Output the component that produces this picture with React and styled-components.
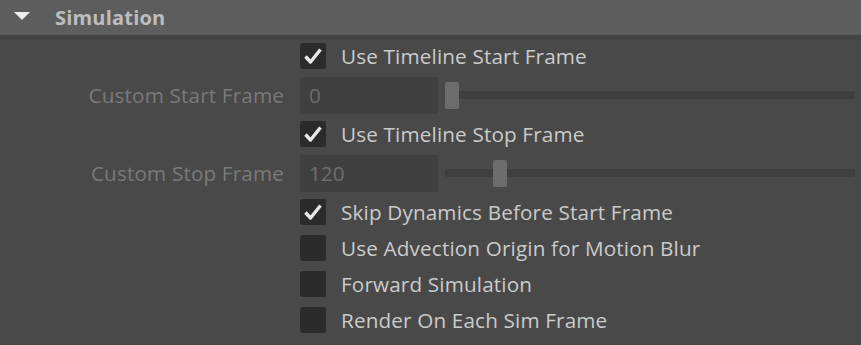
import React from 'react';
import styled, { createGlobalStyle } from 'styled-components';

const GlobalStyle = createGlobalStyle`
  html, body { margin:0; padding:0; background:#494949; }
  body { font-family:"Open Sans", "Noto Sans", sans-serif; }
`

const Panel = styled.div`
  width:861px; height:345px;
  background:#494949;
  overflow:hidden;
`

const Header = styled.div`
  height:35px;
  display:flex; align-items:center;
  background:#5d5d5d;
  border-bottom:5px solid #444;
  padding-left:14px;
  gap:25px;
  h2 {
    margin:0;
    font-size:20px; font-weight:700;
    color:#bdbdbd;
    letter-spacing:0.2px;
  }
`

const Arrow = styled.span`
  width:0; height:0;
  border-left:8px solid transparent;
  border-right:8px solid transparent;
  border-top:8px solid #eee;
  margin-top:-4px;
`

const List = styled.div`
  display:flex; flex-direction:column;
  margin-top:-2px;
`

const Row = styled.div`
  display:grid;
  grid-template-columns:284px 1fr;
  column-gap:16px;
  align-items:center;
  height:${p => p.$tall ? 42 : 36}px;
`

const FieldLabel = styled.span`
  text-align:right;
  font-size:20.7px;
  letter-spacing:0.15px;
  color:#7a7a7a;
  white-space:nowrap;
`

const Check = styled.label`
  display:flex; align-items:center; gap:15px;
  font-size:20.7px;
  letter-spacing:0.15px;
  color:#cbcbcb;
  white-space:nowrap;
`

const Box = styled.span`
  width:26px; height:26px;
  border-radius:2px;
  background:#2b2b2b;
  display:flex; align-items:center; justify-content:center;
`

const Field = styled.div`
  display:flex; align-items:center; gap:7px;
  padding-right:6px;
`

const NumBox = styled.div`
  width:129px; height:37px;
  padding-left:9px;
  display:flex; align-items:center;
  background:#404040;
  border-radius:2px;
  font-size:20.7px;
  color:#6e6e6e;
`

const Track = styled.div`
  flex:1;
  position:relative;
  height:27px;
  &::before {
    content:"";
    position:absolute; left:0; right:0; top:9px;
    height:8px; border-radius:2px;
    background:#3f3f3f;
  }
`

const Handle = styled.span`
  position:absolute; top:0;
  width:14px; height:27px;
  border-radius:2px;
  background:#6c6c6c;
`

const CheckMark = () => (
  <svg width="20" height="18" viewBox="0 0 20 18">
    <path d="M2.5 9.5 L7.5 15 L17.5 2.5" fill="none" stroke="#e8e8e8" strokeWidth="3.4" strokeLinejoin="round" />
  </svg>
)

const CheckRow = ({ label, checked }) => (
  <Row>
    <span />
    <Check>
      <Box>{checked && <CheckMark />}</Box>
      {label}
    </Check>
  </Row>
)

const SliderRow = ({ label, value, max }) => (
  <Row $tall>
    <FieldLabel>{label}</FieldLabel>
    <Field>
      <NumBox>{value}</NumBox>
      <Track>
        <Handle style={{ left: `calc((100% - 14px) * ${value / max})` }} />
      </Track>
    </Field>
  </Row>
)

export default function App() {
  return (
    <Panel>
      <GlobalStyle />
      <Header>
        <Arrow />
        <h2>Simulation</h2>
      </Header>
      <List>
        <CheckRow label="Use Timeline Start Frame" checked />
        <SliderRow label="Custom Start Frame" value={0} max={1000} />
        <CheckRow label="Use Timeline Stop Frame" checked />
        <SliderRow label="Custom Stop Frame" value={120} max={1000} />
        <CheckRow label="Skip Dynamics Before Start Frame" checked />
        <CheckRow label="Use Advection Origin for Motion Blur" />
        <CheckRow label="Forward Simulation" />
        <CheckRow label="Render On Each Sim Frame" />
      </List>
    </Panel>
  );
}
